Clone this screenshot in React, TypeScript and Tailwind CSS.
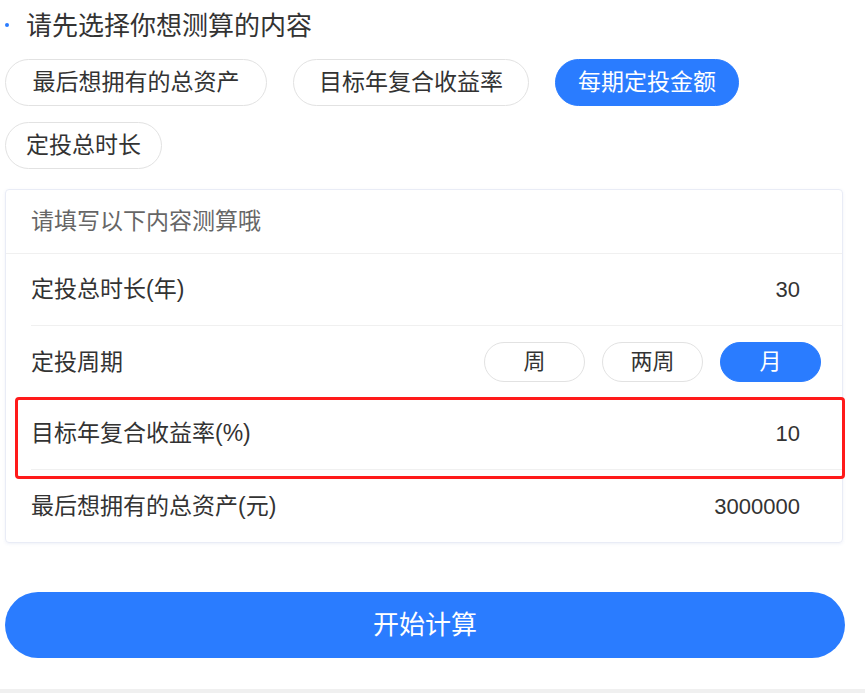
import React, { useState } from 'react';

const FONT = "font-['Liberation_Sans','Noto_Sans_CJK_SC',sans-serif]";

const targets = [
  { label: '最后想拥有的总资产', w: 'w-[262px]' },
  { label: '目标年复合收益率', w: 'w-[236px]' },
  { label: '每期定投金额', w: 'w-[184px]' },
  { label: '定投总时长', w: 'w-[157px]' },
];
const periods = ['周', '两周', '月'];

export default function App() {
  const [target, setTarget] = useState('每期定投金额');
  const [period, setPeriod] = useState('月');

  return (
    <div className={`${FONT} w-[865px] h-[693px] bg-white flex flex-col text-[#333]`}>
      <div className="px-[5px] pt-[13px] flex-1">
        <div className="flex items-center h-[26px] gap-[17px]">
          <span className="w-[4px] h-[4px] mb-[3px] rounded-full bg-[#2a7cff]" />
          <span className="text-[26px] leading-[26px]">请先选择你想测算的内容</span>
        </div>

        <div className="mt-[20px] flex flex-wrap gap-x-[26px] gap-y-[16px] w-[780px]">
          {targets.map((t) => (
            <button
              key={t.label}
              onClick={() => setTarget(t.label)}
              className={`${t.w} h-[47px] rounded-full text-[23px] leading-none ${
                target === t.label
                  ? 'bg-[#2a7cff] text-white border border-[#2a7cff]'
                  : 'bg-white text-[#333] border border-[#e2e2e2]'
              }`}
            >
              {t.label}
            </button>
          ))}
        </div>

        <div className="mt-[20px] w-[838px] border border-[#e9ecf6] rounded-[4px] shadow-[0_1px_3px_rgba(120,140,200,0.12)]">
          <div className="h-[64px] flex items-center pl-[25px] border-b border-[#f0f0f0] text-[23px] text-[#666]">
            请填写以下内容测算哦
          </div>

          <div className="ml-[25px] h-[72px] flex items-center justify-between pr-[42px] border-b border-[#f0f0f0] text-[23px]">
            <span>定投总时长(年)</span>
            <span className="text-[22px]">30</span>
          </div>

          <div className="ml-[25px] h-[72px] flex items-center justify-between pr-[21px] text-[23px]">
            <span>定投周期</span>
            <div className="flex gap-[17px]">
              {periods.map((p) => (
                <button
                  key={p}
                  onClick={() => setPeriod(p)}
                  className={`w-[101px] h-[40px] rounded-full text-[22px] leading-none ${
                    period === p
                      ? 'bg-[#2a7cff] text-white border border-[#2a7cff]'
                      : 'bg-white text-[#333] border border-[#e2e2e2]'
                  }`}
                >
                  {p}
                </button>
              ))}
            </div>
          </div>

          <div className="relative ml-[25px] h-[72px] flex items-center justify-between pr-[42px] border-b border-[#f0f0f0] text-[23px]">
            <span>目标年复合收益率(%)</span>
            <span className="text-[22px]">10</span>
            <span className="absolute left-[-16px] right-[-3px] top-[-1px] bottom-[-10px] border-[3px] border-[#ff1a1a] rounded-[4px] pointer-events-none" />
          </div>

          <div className="ml-[25px] h-[72px] flex items-center justify-between pr-[42px] text-[23px]">
            <span>最后想拥有的总资产(元)</span>
            <span className="text-[22px]">3000000</span>
          </div>
        </div>

        <button className="mt-[49px] w-[840px] h-[66px] rounded-full bg-[#2a7cff] text-white text-[26px] leading-none">
          开始计算
        </button>
      </div>
      <div className="h-[4px] bg-[#f0f0f0]" />
    </div>
  );
}
